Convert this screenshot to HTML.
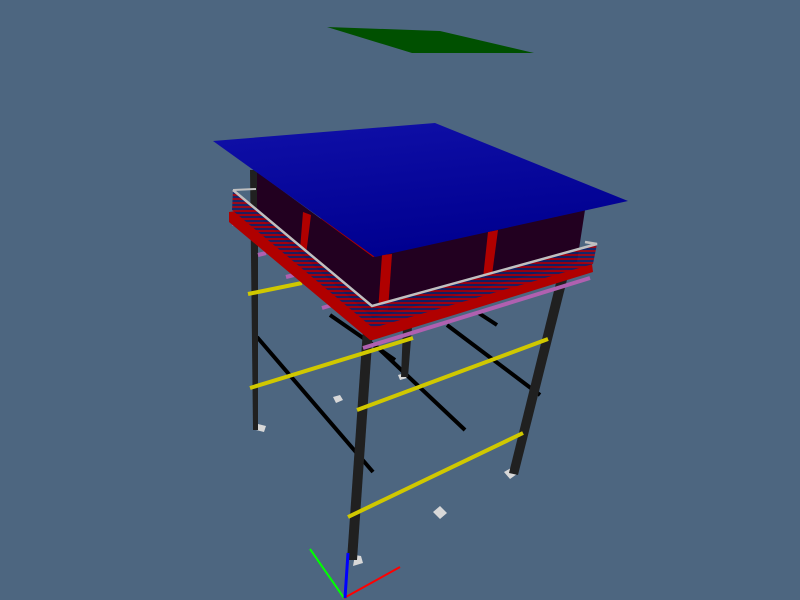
<!DOCTYPE html>
<html><head><style>html,body{margin:0;padding:0;background:#4d6680;width:800px;height:600px;overflow:hidden}</style></head>
<body>
<svg width="800" height="600" viewBox="0 0 800 600" xmlns="http://www.w3.org/2000/svg">
<defs>
<linearGradient id="roof" x1="0" y1="0" x2="0.3" y2="1">
<stop offset="0" stop-color="#1010a8"/><stop offset="1" stop-color="#000090"/>
</linearGradient>
<pattern id="mesh" width="4" height="4" patternUnits="userSpaceOnUse">
<rect width="4" height="4" fill="#a00010"/><rect width="4" height="2" fill="#102068"/>
</pattern>
</defs>
<rect width="800" height="600" fill="#4d6680"/>
<polygon points="327,27 440,31 534,53 412,53" fill="#005000"/>
<g fill="#d8d8d8">
<polygon points="258,424 266,426 264,432 256,430"/>
<polygon points="333,397 340,395 343,400 336,403"/>
<polygon points="398,375 405,373 407,378 400,380"/>
<polygon points="433,512 440,506 447,513 440,519"/>
<polygon points="504,472 511,468 517,474 510,479"/>
<polygon points="355,555 361,556 363,563 353,566"/>
</g>
<g stroke="#000" stroke-width="4">
<line x1="257" y1="337" x2="373" y2="472"/>
<line x1="377" y1="347" x2="465" y2="430"/>
<line x1="447" y1="325" x2="540" y2="395"/>
<line x1="477" y1="312" x2="497" y2="325"/>
<line x1="330" y1="315" x2="395" y2="360"/>
</g>
<g fill="#202020">
<polygon points="250,170 258,170 258,430 253,430"/>
<polygon points="403,327 412,327 408,377 401,377"/>
<polygon points="574,210 584,212 518,475 509,473"/>
<polygon points="368,257 378,257 357,560 347,560"/>
</g>
<g stroke="#d0c800" stroke-width="4">
<line x1="248" y1="294" x2="302" y2="283"/>
<line x1="250" y1="388" x2="413" y2="338"/>
<line x1="357" y1="410" x2="548" y2="339"/>
<line x1="348" y1="517" x2="523" y2="433"/>
</g>
<g stroke="#b060b0" stroke-width="4">
<line x1="363" y1="348" x2="590" y2="278"/>
<line x1="322" y1="308" x2="332" y2="305"/>
<line x1="286" y1="277" x2="294" y2="275"/>
<line x1="258" y1="255" x2="266" y2="253"/>
<line x1="232" y1="224" x2="240" y2="222"/>
</g>
<polygon points="229,212 258,208 592,264 593,272 373,340 370,340 229,222" fill="#b00000"/>
<polygon points="257,172 373,257 373,318 257,215" fill="#220020"/>
<polygon points="373,257 585,210 577,262 373,318" fill="#220020"/>
<polygon points="303,212 311,215 306,255 300,250" fill="#b00000"/>
<polygon points="382,255 392,254 388,310 378,312" fill="#b00000"/>
<polygon points="488,232 498,230 492,275 483,278" fill="#b00000"/>
<polygon points="233,190 372,306 597,244 593,264 373,328 232,210" fill="url(#mesh)" opacity="0.9"/>
<polyline points="233,190 256,189" stroke="#c0c0c0" stroke-width="2" fill="none"/>
<polyline points="233,190 372,306 597,244 585,242" stroke="#c0c0c0" stroke-width="2.5" fill="none"/>
<polygon points="213,141 435,123 628,201 375,257" fill="url(#roof)"/>
<line x1="344" y1="598" x2="310" y2="549" stroke="#00ff00" stroke-width="2"/>
<line x1="344" y1="598" x2="400" y2="567" stroke="#ff0000" stroke-width="2"/>
<line x1="345" y1="598" x2="348" y2="553" stroke="#0000ff" stroke-width="3"/>
</svg>
</body></html>
